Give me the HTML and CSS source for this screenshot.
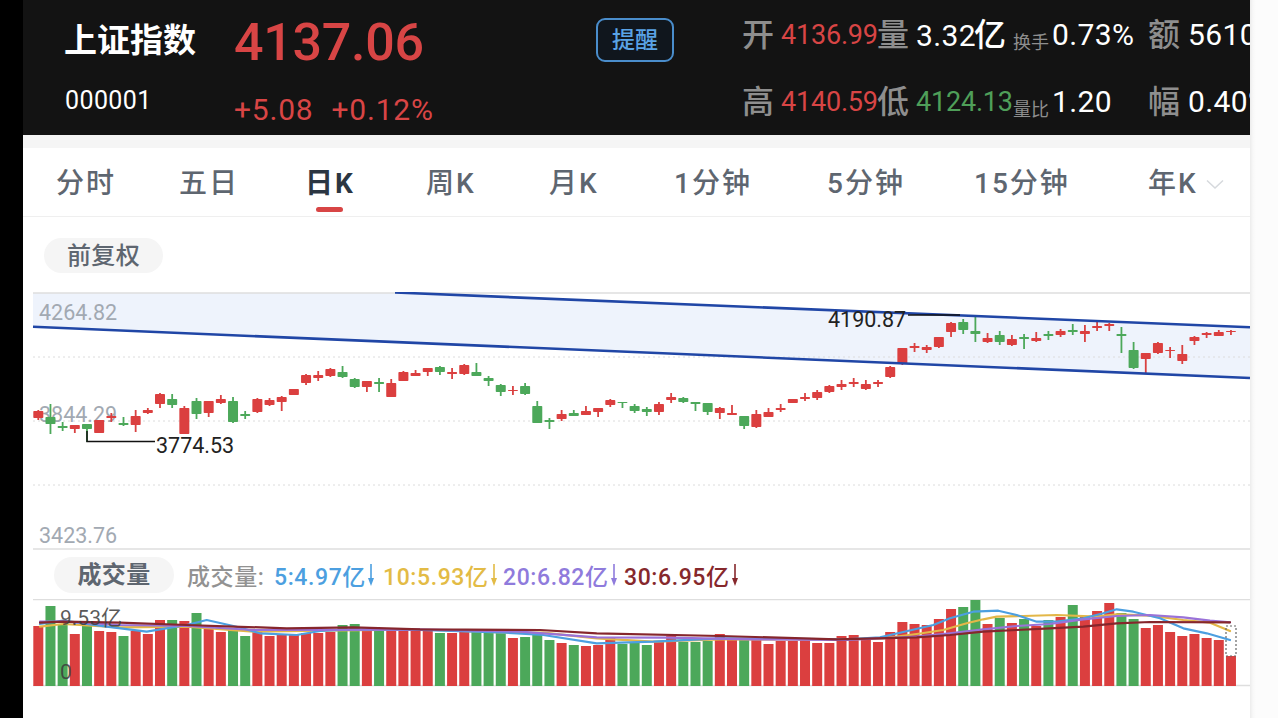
FILE: index.html
```html
<!DOCTYPE html>
<html lang="zh-CN">
<head>
<meta charset="utf-8">
<title>上证指数</title>
<link rel="stylesheet" href="styles.css">
</head>
<body>
<div class="screen">
  <main class="app">
    <header class="quote">
      <div class="identity">
        <div class="name">上证指数</div>
        <div class="code">000001</div>
      </div>
      <div class="pricing">
        <div class="price">4137.06</div>
        <div class="change"><span>+5.08</span><span>+0.12%</span></div>
      </div>
      <button class="remind">提醒</button>
      <div class="stats">
        <span class="lab">开</span><span class="val up">4136.99</span>
        <span class="lab">量</span><span class="val white big">3.32<b class="unit">亿</b></span>
        <span class="lab small">换手</span><span class="val white big">0.73%</span>
        <span class="lab">额</span><span class="val white big">5610</span>
        <span class="lab">高</span><span class="val up">4140.59</span>
        <span class="lab">低</span><span class="val down">4124.13</span>
        <span class="lab small">量比</span><span class="val white big">1.20</span>
        <span class="lab">幅</span><span class="val white big">0.40%</span>
      </div>
    </header>
    <div class="band"></div>
    <nav class="tabs">
      <a class="tab">分时</a>
      <a class="tab">五日</a>
      <a class="tab active">日K</a>
      <a class="tab">周K</a>
      <a class="tab">月K</a>
      <a class="tab">1分钟</a>
      <a class="tab">5分钟</a>
      <a class="tab">15分钟</a>
      <a class="tab more">年K<svg class="chev" viewBox="0 0 18 10"><path d="M1 1.5 9 9l8-7.500"/></svg></a>
    </nav>
    <div class="adjust"><span class="pill">前复权</span></div>
    <svg id="price" class="price-chart" viewBox="23 292 1227 258"></svg>
    <div class="volhead">
      <span class="pill volpill">成交量</span>
      <div class="legend">
        <span class="lg gray">成交量:</span>
        <span class="lg ma5">5:4.97亿<svg class="arrow" viewBox="0 0 8 24"><path d="M4 1v15"/><path class="tip" d="M1 15h6l-3 8z"/></svg></span>
        <span class="lg ma10">10:5.93亿<svg class="arrow" viewBox="0 0 8 24"><path d="M4 1v15"/><path class="tip" d="M1 15h6l-3 8z"/></svg></span>
        <span class="lg ma20">20:6.82亿<svg class="arrow" viewBox="0 0 8 24"><path d="M4 1v15"/><path class="tip" d="M1 15h6l-3 8z"/></svg></span>
        <span class="lg ma30">30:6.95亿<svg class="arrow" viewBox="0 0 8 24"><path d="M4 1v15"/><path class="tip" d="M1 15h6l-3 8z"/></svg></span>
      </div>
    </div>
    <svg id="volume" class="vol-chart" viewBox="23 599 1227 119"></svg>
  </main>
  <aside class="side"></aside>
</div>
<script src="chart.js"></script>
</body>
</html>
```
FILE: styles.css
```css
* { box-sizing: border-box; }
html, body { margin: 0; height: 100%; }
body {
  background: #000;
  font-family: Roboto, "Noto Sans CJK SC", sans-serif;
  overflow: hidden;
}
.screen { display: flex; height: 718px; padding-left: 23px; }
.app { width: 1227px; background: #fff; display: flex; flex-direction: column; overflow: hidden; }
.side { flex: 1; background: linear-gradient(90deg, #ececec, #f8f8f8 3px, #fcfcfc 6px); }

.quote {
  height: 135px; flex: none; background: #131313;
  display: flex; padding-left: 42px; overflow: hidden;
}
.identity { width: 169px; flex: none; padding-top: 21px; }
.name { font-size: 33px; line-height: 40px; font-weight: 700; color: #fff; white-space: nowrap; margin-left: -1px; }
.code { font-size: 25px; line-height: 30px; margin-top: 25px; color: #fff; letter-spacing: .4px; }
.pricing { width: 362px; flex: none; padding-top: 13px; }
.price { font-size: 52px; line-height: 60px; color: #d84545; font-weight: 500; letter-spacing: -.3px; }
.change { display: flex; gap: 18px; margin-top: 21px; font-size: 30px; line-height: 32px; color: #d84545; letter-spacing: .8px; }
.remind {
  width: 78px; height: 44px; flex: none; margin-top: 18px; padding: 0;
  background: #10161d; border: 2px solid #4a8dcb; border-radius: 9px;
  color: #5aa3e6; font: 500 23px/1 Roboto, "Noto Sans CJK SC", sans-serif;
}
.stats {
  flex: none; margin-left: 68px; padding-top: 15px;
  display: grid; grid-template-columns: 39px 96px 39px 97px 39px 96px 40px 80px;
  grid-template-rows: 40px 40px; row-gap: 27px; align-items: center; white-space: nowrap;
}
.lab { font-size: 32px; color: #8e8e8e; font-weight: 500; line-height: 40px; }
.lab.small { font-size: 18px; line-height: 24px; align-self: end; font-weight: 400; }
.val { font-size: 27px; line-height: 40px; letter-spacing: -.2px; }
.val.big { font-size: 30px; letter-spacing: .4px; }
.unit { font-size: 32px; font-weight: 500; letter-spacing: 0; margin-left: -2px; }
.up { color: #d84545; }
.down { color: #4f9f59; }
.white { color: #fff; }

.band { height: 13px; flex: none; background: #f5f5f5; }
.tabs {
  height: 69px; flex: none; padding-left: 33px; border-bottom: 1px solid #efefef;
  display: grid; grid-template-columns: 123px 126px 121px 123px 125px 153px 147px 174px auto;
  align-items: center;
}
.tab {
  font-size: 28px; line-height: 40px; letter-spacing: 2px; font-weight: 500;
  color: #5e6670; white-space: nowrap; position: relative; margin-top: 4px;
}
.tab.active { color: #2b3642; font-weight: 700; }
.tab.active::after {
  content: ""; position: absolute; left: 11px; top: 43px;
  width: 27px; height: 5px; border-radius: 3px; background: #d84545;
}
.more { display: flex; align-items: center; }
.chev { width: 18px; height: 10px; margin-left: 8px; fill: none; stroke: #d6d9dd; stroke-width: 1.5; }

.adjust { height: 75px; flex: none; padding: 21px 0 0 21px; }
.pill {
  display: inline-block; height: 35px; width: 119px; border-radius: 18px;
  background: #f5f5f5; color: #5e6670; text-align: center;
  font-size: 24px; line-height: 37px; font-weight: 500; letter-spacing: .4px;
}
.price-chart { width: 1227px; height: 258px; flex: none; display: block; }
.volhead { height: 49px; flex: none; display: flex; align-items: center; padding-left: 31px; }
.volpill { width: 120px; height: 36px; line-height: 37px; font-weight: 700; }
.legend { display: flex; margin-left: 13px; font-size: 23px; font-weight: 500; white-space: nowrap; letter-spacing: .6px; }
.lg { display: flex; align-items: center; }
.gray { color: #929292; width: 87px; }
.ma5 { color: #4c9fe0; width: 109px; }
.ma10 { color: #e3bb45; width: 120px; }
.ma20 { color: #8f7bdc; width: 121px; }
.ma30 { color: #86282c; }
.arrow { width: 8px; height: 24px; margin-left: 1px; fill: none; stroke: currentColor; stroke-width: 1.6; }
.tip { fill: currentColor; stroke: none; }
.vol-chart { width: 1227px; height: 119px; flex: none; display: block; }

.grid-solid { stroke: #dedede; stroke-width: 1.5; }
.grid-dot { stroke: #dcdcdc; stroke-width: 1; stroke-dasharray: 2 3; }
.channel { fill: #eef3fc; }
.trend { stroke: #2046a6; stroke-width: 2.600; fill: none; }
.axis { font: 21.500px Roboto, sans-serif; fill: #a2a9b2; }
.extreme { font: 21.500px Roboto, sans-serif; fill: #222; }
.leader { stroke: #111; stroke-width: 1.5; fill: none; }
.wick-r { stroke: #d94040; stroke-width: 1.8; }
.wick-g { stroke: #4ca85a; stroke-width: 1.8; }
.body-r, .bar-r { fill: #db3f3f; }
.body-g, .bar-g { fill: #4ca85a; }
.ma { fill: none; stroke-width: 2.200; stroke-linejoin: round; stroke-linecap: round; }
.l5 { stroke: #4c9fe0; }
.l10 { stroke: #e3b748; }
.l20 { stroke: #9a72d8; }
.l30 { stroke: #86262c; }
.cursor { fill: none; stroke: #666; stroke-width: 1.2; stroke-dasharray: 2 2; }
.volaxis { font: 21px Roboto, "Noto Sans CJK SC", sans-serif; fill: #3c3c3c; fill-opacity: .85; }
```
FILE: chart.js
```js
var NS = "http://www.w3.org/2000/svg";
function el(parent, tag, attrs, text) {
  var n = document.createElementNS(NS, tag);
  for (var k in attrs) n.setAttribute(k, attrs[k]);
  if (text) n.textContent = text;
  parent.appendChild(n);
  return n;
}
var X0 = 38.3, DX = 12.17;
// color, body top, body bottom, wick top, wick bottom
var candles = [
"r411 418 410 420","g417 424 404 434","g426 428 422 431","r425 429 425 433","g424 429 424 442",
"r420 433 420 433","r416 418 413 422","g423 425 417 426","r416 425 410 432","r410 413 408 414",
"r394 404 393 408","g399 405 394 408","r408 434 406 434","g401 414 398 419","r401 413 401 417",
"r399 403 395 404","g401 422 397 423","g414 416 411 419","r399 412 398 413","r400 405 398 406",
"r397 402 396 411","r389 395 389 395","r375 383 374 385","r375 378 371 381","r369 376 368 377",
"g372 377 366 378","g379 387 378 388","r381 387 381 392","g382 384 378 392","r383 397 379 397",
"r372 381 371 381","r373 376 370 376","r368 372 368 376","g367 372 366 375","r372 374 368 379",
"r365 374 364 375","g372 376 363 376","g378 381 376 386","g385 392 384 396","r390 391 386 395",
"g386 394 383 395","g406 423 401 423","g420 422 418 429","r414 419 410 421","g413 416 410 416",
"r411 415 406 415","r408 412 408 417","r400 405 399 407","g402 403 402 408","g406 411 404 413",
"g409 412 407 416","r404 412 402 415","r397 400 393 403","g398 402 397 403","g402 404 402 411",
"g403 412 403 415","r408 413 407 419","r413 415 405 415","g416 426 416 429","r414 427 410 428",
"r412 417 408 417","r408 410 404 412","r399 403 399 403","r397 399 393 401","r392 398 390 400",
"r386 392 385 393","r384 387 380 390","r382 384 378 387","r384 389 380 390","r382 384 380 387",
"r367 377 366 378","r348 364 348 365","r346 348 343 352","r347 350 345 353","r337 347 337 348",
"r323 332 322 337","g322 330 319 334","g331 334 317 342","r338 342 333 343","g335 342 331 345",
"r339 345 335 346","g337 339 334 349","r338 341 332 342","g334 336 331 340","r331 335 329 337",
"g330 332 324 335","r331 334 325 342","r326 328 322 331","r324 326 323 331","g334 336 327 353",
"g350 368 342 369","r353 359 353 373","r343 353 342 354","r350 351 347 358","r354 361 345 364",
"r337 341 336 345","r333 335 332 338","r332 336 330 336","r331 332 330 335"
];
var vols = [
"r626","g606","g624","r634","g625","r631","r632","g636","r631","r634",
"r620","g620","r621","g613","r625","r632","g630","g636","r632","r636",
"r635","r634","r633","r633","r632","g625","g624","r631","g629","r629",
"r629","r629","r631","g633","r633","r632","g632","g632","g632","r638",
"g637","g633","g640","r643","g645","r646","r645","r637","g644","g643",
"g645","r641","r636","g642","g642","g641","r634","r638","g638","r640",
"r644","r641","r641","r640","r643","r643","r636","r635","r640","r642",
"r632","r622","r624","r625","r619","r609","g607","g600","r624","g618",
"r623","g619","r626","g620","r617","g605","r617","r611","r603","g613",
"g619","r628","r625","r632","r636","r634","r638","r640","r656"
];
// moving averages, traced per crop as [offset, x, y] with x,y in 3x crop pixels
function pts(groups) {
  var out = [];
  groups.forEach(function (g) {
    for (var i = 0; i < g[1].length; i += 2) {
      out.push((g[0] + g[1][i] / 3).toFixed(1) + "," + (550 + g[1][i + 1] / 3).toFixed(1));
    }
  });
  return out.join(" ");
}
var lines = {
  l10: [[20,[60,230,130,222,300,232,500,230,700,245,900,242,1200,238]],
        [420,[260,248,370,248,530,265,700,275,900,268,1280,268]],
        [850,[100,265,200,252,280,240,350,220,400,208,440,200,520,198,620,195,740,200,800,193,900,197,1000,210,1080,218,1140,243]]],
  l5:  [[20,[60,222,130,212,260,230,380,245,500,225,560,210,650,230,720,250,830,255,900,243,1000,238,1200,240]],
        [420,[260,248,370,255,530,280,700,275,900,265,1280,268]],
        [850,[90,262,150,248,250,225,300,205,370,185,445,182,500,195,560,215,620,215,700,205,760,190,800,178,850,185,930,205,1000,235,1070,250,1140,270]]],
  l20: [[20,[60,215,130,215,300,225,500,228,700,240,900,240,1200,238]],
        [420,[300,245,530,262,740,263,1000,268,1280,270]],
        [850,[200,260,300,250,400,238,500,228,600,222,700,208,800,198,900,195,1000,202,1080,212,1140,217]]],
  l30: [[20,[60,218,130,215,300,218,500,225,800,235,1000,232,1200,238]],
        [420,[360,240,530,250,900,258,1250,268]],
        [850,[200,262,300,255,400,245,500,240,600,235,700,230,800,220,900,216,1140,217]]]
};

var p = document.getElementById("price");
el(p, "polygon", { "class": "channel", points: "33,293 400,293 1250,327 1250,378 33,327" });
el(p, "line", { "class": "grid-solid", x1: 33, x2: 1250, y1: 293, y2: 293 });
el(p, "line", { "class": "grid-solid", x1: 33, x2: 1250, y1: 549, y2: 549 });
[357, 421, 485].forEach(function (y) {
  el(p, "line", { "class": "grid-dot", x1: 33, x2: 1250, y1: y, y2: y });
});
el(p, "text", { "class": "axis", x: 39, y: 320 }, "4264.82");
el(p, "text", { "class": "axis", x: 39, y: 422 }, "3844.29");
el(p, "text", { "class": "axis", x: 39, y: 543 }, "3423.76");
candles.forEach(function (c, i) {
  var k = c[0], v = c.slice(1).split(" ").map(Number), x = X0 + DX * i;
  el(p, "line", { "class": "wick-" + k, x1: x, x2: x, y1: v[2], y2: v[3] });
  el(p, "rect", { "class": "body-" + k, x: x - 5, y: v[0], width: 10, height: v[1] - v[0], rx: 0.8 });
});
el(p, "line", { "class": "trend", x1: 33, y1: 326.8, x2: 1250, y2: 378 });
el(p, "line", { "class": "trend", x1: 395, y1: 292.5, x2: 1250, y2: 327.2 });
el(p, "polyline", { "class": "leader", points: "87,431 87,441.500 155,441.500" });
el(p, "polyline", { "class": "leader", points: "908,315 960,315" });
el(p, "text", { "class": "extreme", x: 156, y: 453 }, "3774.53");
el(p, "text", { "class": "extreme", x: 828, y: 327 }, "4190.87");

var s = document.getElementById("volume");
el(s, "line", { "class": "grid-solid", x1: 33, x2: 1250, y1: 599.5, y2: 599.5 });
el(s, "line", { "class": "grid-solid", x1: 33, x2: 1250, y1: 685.5, y2: 685.5 });
vols.forEach(function (b, i) {
  var top = Number(b.slice(1));
  el(s, "rect", { "class": "bar-" + b[0], x: X0 - 5 + DX * i, y: top, width: 10, height: 686 - top });
});
["l10", "l5", "l20", "l30"].forEach(function (k) {
  el(s, "polyline", { "class": "ma " + k, points: pts(lines[k]) });
});
el(s, "rect", { "class": "cursor", x: 1226, y: 626, width: 10, height: 30 });
el(s, "text", { "class": "volaxis", x: 60, y: 625 }, "9.53亿");
el(s, "text", { "class": "volaxis", x: 60, y: 679 }, "0");
```
